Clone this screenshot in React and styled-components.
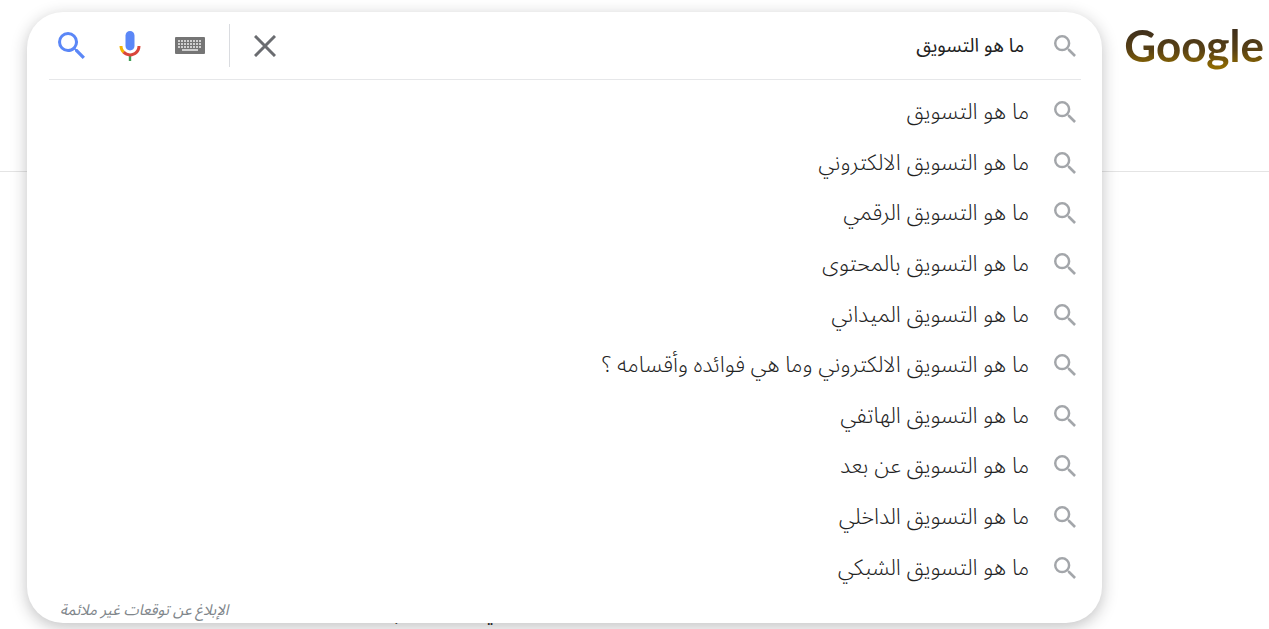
import React, { useState } from "react";
import styled, { createGlobalStyle } from "styled-components";

const suggestions = [
  "ما هو التسويق",
  "ما هو التسويق الالكتروني",
  "ما هو التسويق الرقمي",
  "ما هو التسويق بالمحتوى",
  "ما هو التسويق الميداني",
  "ما هو التسويق الالكتروني وما هي فوائده وأقسامه ؟",
  "ما هو التسويق الهاتفي",
  "ما هو التسويق عن بعد",
  "ما هو التسويق الداخلي",
  "ما هو التسويق الشبكي",
];

const SearchIcon = ({ size, color }) => (
  <svg width={size} height={size} viewBox="3 3 17.5 17.5" fill={color} aria-hidden="true">
    <path d="M15.5 14h-.79l-.28-.27A6.471 6.471 0 0 0 16 9.5 6.5 6.5 0 1 0 9.5 16c1.61 0 3.09-.59 4.23-1.57l.27.28v.79l5 4.99L20.49 19l-4.99-5zm-6 0C7.01 14 5 11.99 5 9.5S7.01 5 9.5 5 14 7.01 14 9.5 11.99 14 9.5 14z" />
  </svg>
);

const MicIcon = () => (
  <svg width="42" height="36" viewBox="0 0 24 24" aria-hidden="true">
    <path fill="#5b87f7" d="M12 15c1.66 0 3-1.31 3-2.97V4.98C15 3.32 13.66 2 12 2S9 3.32 9 4.98v7.05C9 13.69 10.34 15 12 15z" />
    <path fill="#3f9d55" d="M11.2 18.1h1.6V22h-1.6z" />
    <path fill="#f4b400" d="M7.05 16.87C5.78 15.56 5 13.98 5 12h2c0 1.45.56 2.42 1.47 3.38v.32l-1.15 1.18z" />
    <path fill="#d9453a" d="M12 16.93a4.97 4.97 0 0 1-3.54-1.55l-1.41 1.49C8.31 18.13 10.02 18.93 12 18.93c3.87 0 6.99-2.92 6.99-6.93h-1.99c0 2.92-2.24 4.93-5 4.93z" />
  </svg>
);

const KeyboardIcon = () => (
  <svg width="30" height="17" viewBox="0 0 30 17" aria-hidden="true">
    <rect width="30" height="17" rx="1" fill="#757575" />
    <path stroke="#cfcfcf" strokeWidth="2" strokeDasharray="2 1" d="M3 4h24M3 7h24M3 10h24" />
    <path stroke="#cfcfcf" strokeWidth="2" d="M7 13h16" />
  </svg>
);

const CloseIcon = () => (
  <svg width="22" height="22" viewBox="0 0 22 22" stroke="#6a6c70" strokeWidth="3" aria-hidden="true">
    <path d="M1 1l20 20M21 1L1 21" />
  </svg>
);

const App = () => {
  const [query, setQuery] = useState("ما هو التسويق");

  return (
    <>
      <GlobalStyle />
      <Page dir="rtl">
        <Header>
          <Logo href="#home">Google</Logo>
          <SearchArea>
            <SearchCard role="search" onSubmit={(event) => event.preventDefault()}>
              <SearchBar>
                <SearchIcon size={22} color="#a3a6aa" />
                <QueryInput
                  aria-label="بحث"
                  value={query}
                  onChange={(event) => setQuery(event.target.value)}
                />
                <Tools>
                  <ToolButton type="button" aria-label="محو" onClick={() => setQuery("")}>
                    <CloseIcon />
                  </ToolButton>
                  <Divider />
                  <ToolButton type="button" aria-label="لوحة المفاتيح">
                    <KeyboardIcon />
                  </ToolButton>
                  <ToolButton type="button" aria-label="البحث الصوتي">
                    <MicIcon />
                  </ToolButton>
                  <ToolButton type="submit" aria-label="بحث Google">
                    <SearchIcon size={27} color="#5b87f7" />
                  </ToolButton>
                </Tools>
              </SearchBar>
              <SuggestionList>
                {suggestions.map((text) => (
                  <li key={text}>
                    <Suggestion type="button" onClick={() => setQuery(text)}>
                      <SearchIcon size={22} color="#a3a6aa" />
                      <span>{text}</span>
                    </Suggestion>
                  </li>
                ))}
              </SuggestionList>
              <ReportLink href="#report">الإبلاغ عن توقعات غير ملائمة</ReportLink>
            </SearchCard>
          </SearchArea>
        </Header>
        <Results>
          <p>و كل تبذله الشركة لبناء الثقة التي و تكسب م</p>
        </Results>
      </Page>
    </>
  );
};

export default App;

const GlobalStyle = createGlobalStyle`
  * {
    box-sizing: border-box;
  }

  body {
    margin: 0;
    background: #fff;
    font-family: "Noto Sans Arabic", "Noto Naskh Arabic", "Segoe UI", "Open Sans", "DejaVu Sans", sans-serif;
  }
`;

const Page = styled.div`
  min-height: 100vh;
`;

const Header = styled.header`
  display: flex;
  align-items: flex-start;
  gap: 22px;
  height: 172px;
  padding: 12px 5px 0 27px;
  border-bottom: 1px solid #e4e4e4;
`;

const Logo = styled.a`
  margin-top: 5px;
  font-family: Lato, sans-serif;
  font-size: 44px;
  font-weight: 700;
  line-height: 56px;
  text-decoration: none;
  color: transparent;
  background: linear-gradient(#40301c 25%, #5a4214 60%, #8f6a00 90%);
  background-clip: text;
`;

const SearchArea = styled.div`
  position: relative;
  flex: 1;
`;

const SearchCard = styled.form`
  position: absolute;
  top: 0;
  right: 0;
  left: 0;
  display: flex;
  flex-direction: column;
  min-height: 611px;
  border-radius: 36px;
  background: #fff;
  box-shadow: 0 4px 16px rgba(32, 33, 36, 0.28);
`;

const SearchBar = styled.div`
  display: flex;
  align-items: center;
  gap: 30px;
  height: 68px;
  margin: 0 21px 0 22px;
  padding: 0 5px 0 9px;
  border-bottom: 1px solid #e6e7e9;
`;

const QueryInput = styled.input`
  flex: 1;
  min-width: 0;
  padding: 0;
  border: 0;
  outline: 0;
  background: none;
  color: #222;
  font-family: inherit;
  font-size: 19px;
`;

const Tools = styled.div`
  display: flex;
  align-items: center;
  gap: 24px;
`;

const ToolButton = styled.button`
  display: flex;
  align-items: center;
  justify-content: center;
  padding: 0;
  border: 0;
  background: none;
  cursor: pointer;
`;

const Divider = styled.span`
  width: 1px;
  height: 43px;
  background: #dadce0;
`;

const SuggestionList = styled.ul`
  display: grid;
  flex: 1;
  grid-auto-rows: 1fr;
  margin: 0;
  padding: 7px 0 5px;
  list-style: none;
`;

const Suggestion = styled.button`
  display: flex;
  align-items: center;
  gap: 25px;
  width: 100%;
  height: 100%;
  padding: 0 26px;
  border: 0;
  background: none;
  color: #222;
  font-family: inherit;
  font-size: 22px;
  font-weight: 300;
  text-align: right;
  cursor: pointer;
`;

const ReportLink = styled.a`
  align-self: flex-end;
  margin: 0 0 1px 33px;
  color: #80868b;
  font-size: 15px;
  font-style: italic;
  line-height: 24px;
  text-decoration: none;
`;

const Results = styled.main`
  padding: 424px 530px 0 27px;
  color: #222;
  font-size: 20px;
  line-height: 28px;
  white-space: nowrap;

  p {
    margin: 0;
  }
`;
